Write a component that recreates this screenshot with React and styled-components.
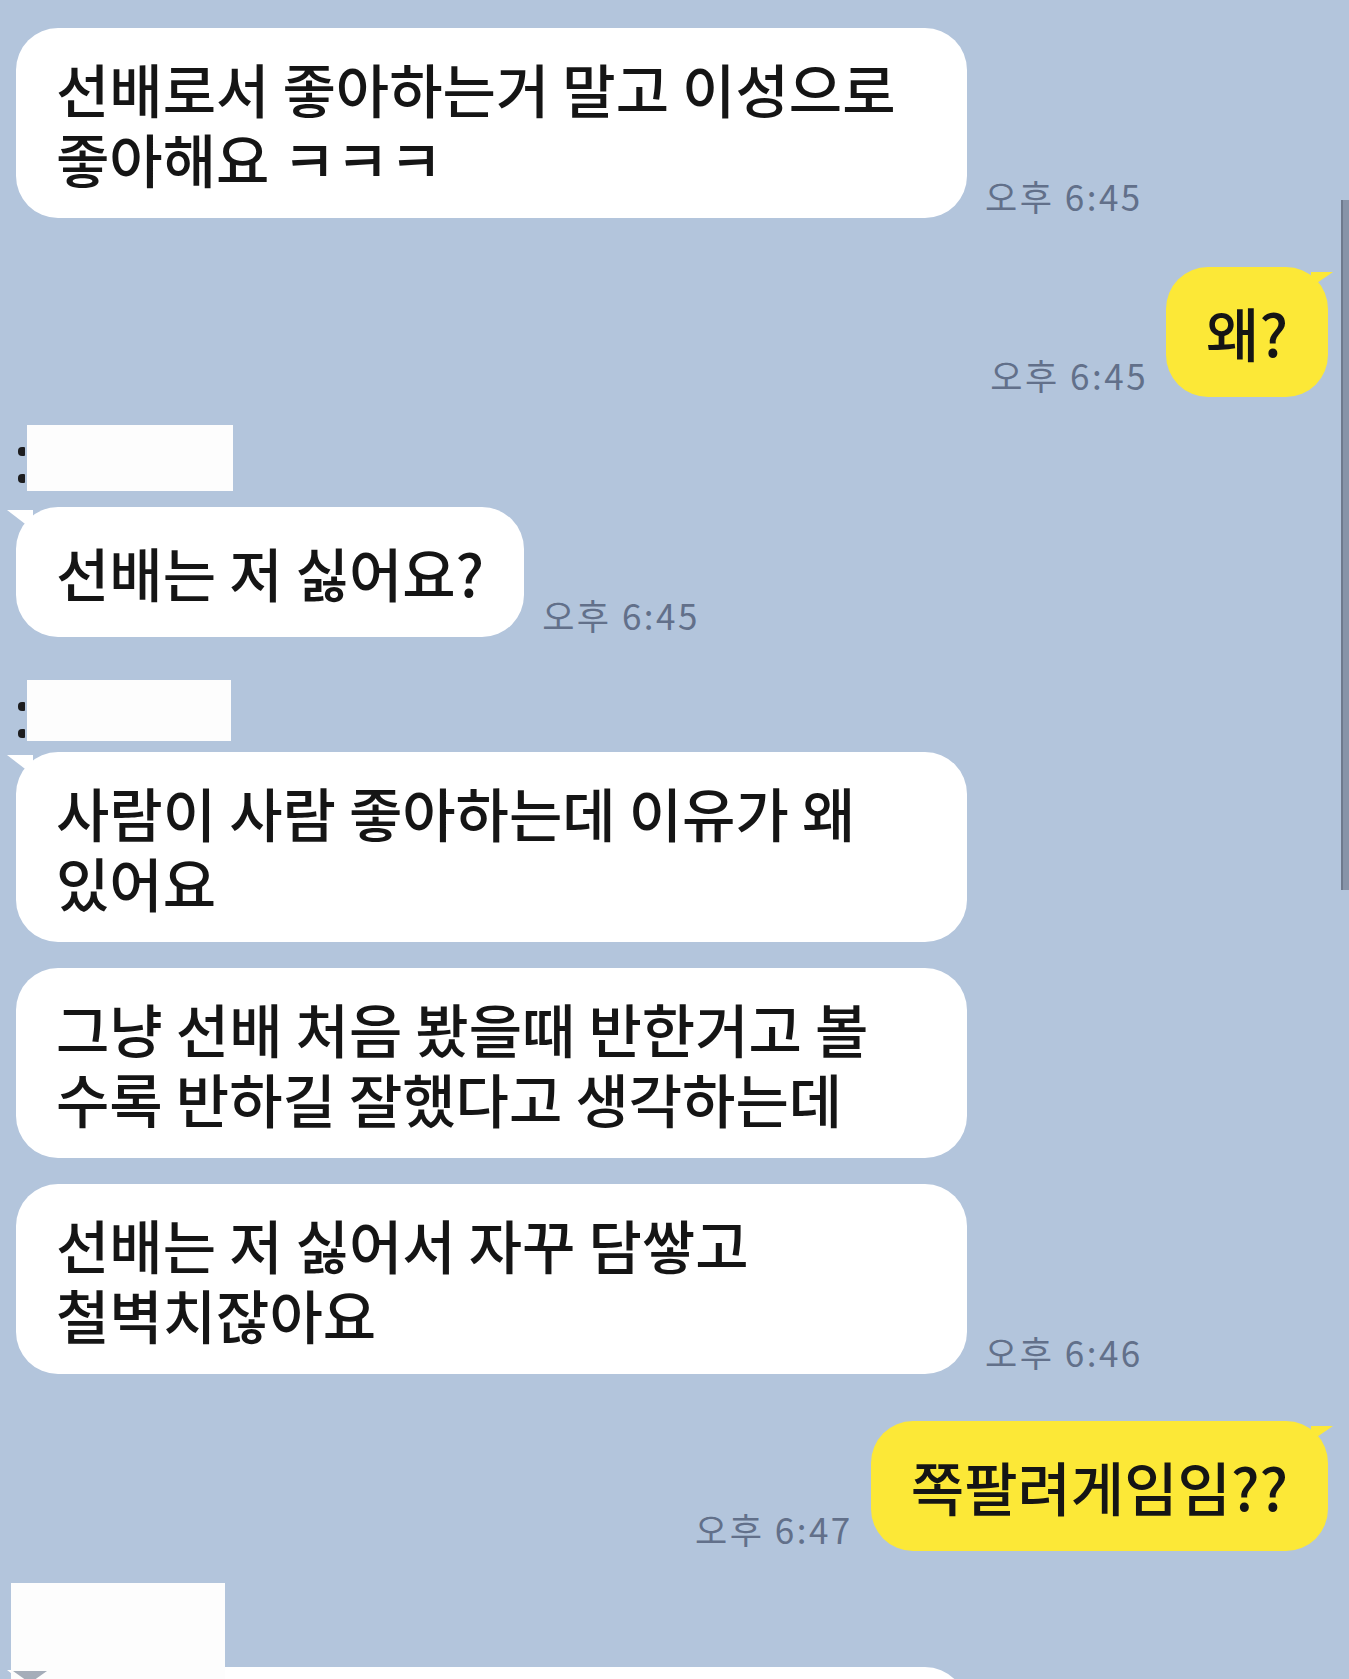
import React from "react";
import styled, { createGlobalStyle, css } from "styled-components";

const GlobalStyle = createGlobalStyle`
  html, body {
    margin: 0;
    padding: 0;
    background: #b3c5dc;
  }
  body {
    font-family: "Noto Sans CJK KR", "Noto Sans", sans-serif;
    overflow: hidden;
  }
`;

const Screen = styled.div`
  position: relative;
  width: 1349px;
  height: 1679px;
  box-sizing: border-box;
  padding: 0 21px 0 16px;
  overflow: hidden;
  background: #b3c5dc;
  display: flex;
  flex-direction: column;
`;

// overlay scrollbar on the right edge
const Scrollbar = styled.div`
  position: absolute;
  right: 0;
  top: 200px;
  width: 6px;
  height: 690px;
  background: #8794a8;
  border-left: 2px solid #6e7a8d;
`;

// bottom edge of the previous message, cut off by the screenshot
const PrevBubbleEdge = styled.div`
  margin-left: 36px;
  width: 220px;
  height: 4px;
  background: #fff;
  border-radius: 0 0 40px 40px / 0 0 4px 4px;
`;

const Row = styled.div`
  display: flex;
  flex-direction: ${p => (p.$mine ? "row-reverse" : "row")};
  align-items: flex-end;
  gap: 18px;
  margin-top: ${p => p.$mt || 0}px;
`;

const tail = css`
  &::before {
    content: "";
    position: absolute;
    background: inherit;
    ${p =>
      p.$mine
        ? css`
            top: 5px;
            right: -5px;
            width: 22px;
            height: 15px;
            clip-path: polygon(0 0, 100% 0, 0 100%);
          `
        : css`
            top: 3px;
            left: -9px;
            width: 26px;
            height: 20px;
            clip-path: polygon(0 0, 100% 0, 100% 100%);
          `}
  }
`;

const Bubble = styled.div`
  position: relative;
  box-sizing: border-box;
  flex-shrink: 0;
  width: ${p => (p.$wide ? "951px" : "auto")};
  min-height: 130px;
  padding: 25px 40px;
  display: flex;
  align-items: center;
  border-radius: 42px;
  background: ${p => (p.$mine ? "#fce837" : "#ffffff")};
  color: #151515;
  font-size: 58px;
  font-weight: 500;
  line-height: 70px;
  white-space: nowrap;
  ${p => p.$tail && tail}
`;

const Time = styled.span`
  margin-bottom: 5px;
  color: #62708a;
  font-size: 35px;
  line-height: 1;
  letter-spacing: 2.5px;
  white-space: nowrap;
`;

const NameRow = styled.div`
  position: relative;
  z-index: 1;
  display: flex;
  align-items: flex-start;
  margin-top: ${p => p.$mt || 0}px;
  margin-left: ${p => p.$ml || 0}px;
  margin-bottom: ${p => p.$mb || 0}px;
`;

const Marks = styled.div`
  width: 9px;
  display: flex;
  flex-direction: column;
  gap: 18px;
  padding-top: 22px;
`;

const Mark = styled.span`
  width: 7px;
  height: 9px;
  background: #1d1d1f;
  border-radius: 4px 1px 1px 4px;
`;

// white box hiding the sender's name
const Redact = styled.div`
  position: relative;
  width: ${p => p.$w}px;
  height: ${p => p.$h}px;
  background: #fdfdfd;
`;

const TailGhost = styled.span`
  position: absolute;
  left: 2px;
  bottom: 0;
  width: 0;
  height: 0;
  border-left: 17px solid transparent;
  border-right: 17px solid transparent;
  border-top: 12px solid #a5adb9;
`;

export default function App() {
  return (
    <>
      <GlobalStyle />
      <Screen>
        <PrevBubbleEdge />

        <Row $mt={28}>
          <Bubble $wide>
            <div>
              선배로서 좋아하는거 말고 이성으로
              <br />
              좋아해요 ㅋㅋㅋ
            </div>
          </Bubble>
          <Time>오후 6:45</Time>
        </Row>

        <Row $mine $mt={49}>
          <Bubble $mine $tail>
            왜?
          </Bubble>
          <Time>오후 6:45</Time>
        </Row>

        <NameRow $mt={28} $ml={2}>
          <Marks>
            <Mark />
            <Mark />
          </Marks>
          <Redact $w={206} $h={66} />
        </NameRow>

        <Row $mt={16}>
          <Bubble $tail>선배는 저 싫어요?</Bubble>
          <Time>오후 6:45</Time>
        </Row>

        <NameRow $mt={43} $ml={2}>
          <Marks>
            <Mark />
            <Mark />
          </Marks>
          <Redact $w={204} $h={61} />
        </NameRow>

        <Row $mt={11}>
          <Bubble $wide $tail>
            <div>
              사람이 사람 좋아하는데 이유가 왜
              <br />
              있어요
            </div>
          </Bubble>
        </Row>

        <Row $mt={26}>
          <Bubble $wide>
            <div>
              그냥 선배 처음 봤을때 반한거고 볼
              <br />
              수록 반하길 잘했다고 생각하는데
            </div>
          </Bubble>
        </Row>

        <Row $mt={26}>
          <Bubble $wide>
            <div>
              선배는 저 싫어서 자꾸 담쌓고
              <br />
              철벽치잖아요
            </div>
          </Bubble>
          <Time>오후 6:46</Time>
        </Row>

        <Row $mine $mt={47}>
          <Bubble $mine $tail>
            쪽팔려게임임??
          </Bubble>
          <Time>오후 6:47</Time>
        </Row>

        <NameRow $mt={32} $ml={-5} $mb={-16}>
          <Redact $w={214} $h={100}>
            <TailGhost />
          </Redact>
        </NameRow>

        <Row>
          <Bubble $wide $tail />
        </Row>

        <Scrollbar />
      </Screen>
    </>
  );
}
